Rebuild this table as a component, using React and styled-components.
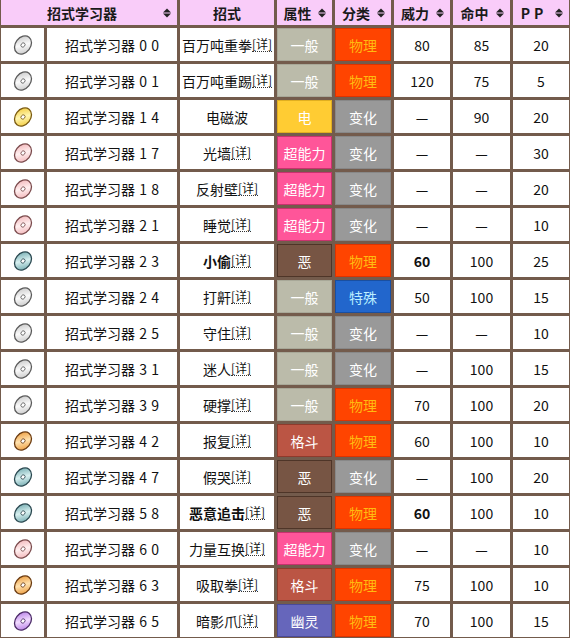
import React from 'react';
import styled, { createGlobalStyle } from 'styled-components';

const GlobalStyle = createGlobalStyle`
  html, body {
    margin: 0;
    padding: 0;
    background: #ffffff;
  }
  body {
    font-family: "Noto Sans CJK SC", "Noto Sans", sans-serif;
    font-size: 14px;
    color: #000;
  }
`;

const types = {
  一般: { bg: '#bbbbaa', border: '#a8a898' },
  电: { bg: '#ffcc33', border: '#e0ae20' },
  超能力: { bg: '#ff5599', border: '#c8326e' },
  恶: { bg: '#775544', border: '#4e3528' },
  格斗: { bg: '#bb5544', border: '#8f3a2c' },
  幽灵: { bg: '#6666bb', border: '#4a4a98' },
};

const categories = {
  物理: { bg: '#ff4400', color: '#ffbb11', border: '#dd3300' },
  特殊: { bg: '#2266cc', color: '#bbeeff', border: '#1a4fa0' },
  变化: { bg: '#999999', color: '#ffffff', border: '#888888' },
};

const discs = {
  grey: ['#fafafa', '#bdbdbd', '#5a5a5a'],
  yellow: ['#fff6b0', '#f0c020', '#7a5a10'],
  pink: ['#fff0f0', '#f0a8ac', '#7a4a4c'],
  teal: ['#d8f0f0', '#5a9aa0', '#2a4850'],
  orange: ['#ffe2b0', '#e88a20', '#6a3a10'],
  purple: ['#f2dcff', '#a868e0', '#4a2a66'],
};

const rows = [
  { no: '00', disc: 'grey', move: '百万吨重拳', type: '一般', cat: '物理', power: '80', acc: '85', pp: '20' },
  { no: '01', disc: 'grey', move: '百万吨重踢', type: '一般', cat: '物理', power: '120', acc: '75', pp: '5' },
  { no: '14', disc: 'yellow', move: '电磁波', type: '电', cat: '变化', power: '—', acc: '90', pp: '20', noLink: true },
  { no: '17', disc: 'pink', move: '光墙', type: '超能力', cat: '变化', power: '—', acc: '—', pp: '30' },
  { no: '18', disc: 'pink', move: '反射壁', type: '超能力', cat: '变化', power: '—', acc: '—', pp: '20' },
  { no: '21', disc: 'pink', move: '睡觉', type: '超能力', cat: '变化', power: '—', acc: '—', pp: '10' },
  { no: '23', disc: 'teal', move: '小偷', type: '恶', cat: '物理', power: '60', acc: '100', pp: '25', bold: true },
  { no: '24', disc: 'grey', move: '打鼾', type: '一般', cat: '特殊', power: '50', acc: '100', pp: '15' },
  { no: '25', disc: 'grey', move: '守住', type: '一般', cat: '变化', power: '—', acc: '—', pp: '10' },
  { no: '31', disc: 'grey', move: '迷人', type: '一般', cat: '变化', power: '—', acc: '100', pp: '15' },
  { no: '39', disc: 'grey', move: '硬撑', type: '一般', cat: '物理', power: '70', acc: '100', pp: '20' },
  { no: '42', disc: 'orange', move: '报复', type: '格斗', cat: '物理', power: '60', acc: '100', pp: '10' },
  { no: '47', disc: 'teal', move: '假哭', type: '恶', cat: '变化', power: '—', acc: '100', pp: '20' },
  { no: '58', disc: 'teal', move: '恶意追击', type: '恶', cat: '物理', power: '60', acc: '100', pp: '10', bold: true },
  { no: '60', disc: 'pink', move: '力量互换', type: '超能力', cat: '变化', power: '—', acc: '—', pp: '10' },
  { no: '63', disc: 'orange', move: '吸取拳', type: '格斗', cat: '物理', power: '75', acc: '100', pp: '10' },
  { no: '65', disc: 'purple', move: '暗影爪', type: '幽灵', cat: '物理', power: '70', acc: '100', pp: '15' },
];

const Table = styled.div`
  display: grid;
  grid-template-columns: 43px 130px 94px 55px 56px 56px 57px 56px;
  grid-template-rows: 25px;
  grid-auto-rows: 33px;
  gap: 3px;
  padding: 0 1px 1px;
  width: 570px;
  box-sizing: border-box;
  background: #735b4c;
`;

const HeadCell = styled.div`
  grid-column: ${(p) => (p.$span ? `span ${p.$span}` : 'auto')};
  display: flex;
  align-items: center;
  justify-content: center;
  position: relative;
  background: #f9ccf9;
  font-weight: bold;
  font-size: 14px;
  color: #1a1a1a;
  padding-right: ${(p) => (p.$sortable ? '14px' : '0')};
  letter-spacing: ${(p) => p.$spaced || 0};
`;

const SortIcon = styled.span`
  position: absolute;
  right: 6px;
  top: 50%;
  transform: translateY(-50%);
  display: flex;
  flex-direction: column;
  gap: 1px;

  &::before,
  &::after {
    content: '';
    display: block;
    border-left: 4px solid transparent;
    border-right: 4px solid transparent;
  }
  &::before {
    border-bottom: 4px solid #222;
  }
  &::after {
    border-top: 4px solid #222;
  }
`;

const Cell = styled.div`
  display: flex;
  align-items: center;
  justify-content: center;
  background: #ffffff;
  font-size: 14px;
  color: #111;
  font-weight: ${(p) => (p.$bold ? 'bold' : 'normal')};
  white-space: nowrap;
`;

const NameCell = styled(Cell)`
  word-spacing: 1px;
`;

const Tag = styled(Cell)`
  background: ${(p) => p.$bg};
  color: ${(p) => p.$color || '#ffffff'};
  box-shadow: inset 0 0 0 1px ${(p) => p.$border};
`;

const Detail = styled.sup`
  font-size: 12px;
  line-height: 1;
  vertical-align: 7px;
  border-bottom: 1px dotted #333;
  font-weight: normal;
  padding-bottom: 1px;
`;

const Disc = ({ kind }) => {
  const [light, mid, dark] = discs[kind];
  const id = `g-${kind}`;
  return (
    <svg width="22" height="22" viewBox="0 0 22 22">
      <defs>
        <linearGradient id={id} x1="0" y1="0" x2="1" y2="1">
          <stop offset="0" stopColor={mid} />
          <stop offset="0.5" stopColor={light} />
          <stop offset="1" stopColor={mid} />
        </linearGradient>
      </defs>
      <ellipse cx="11" cy="11" rx="7.6" ry="9.8" transform="rotate(38 11 11)" fill={`url(#${id})`} stroke={dark} strokeWidth="1.3" />
      <ellipse cx="11" cy="11" rx="1.9" ry="2.3" transform="rotate(38 11 11)" fill="#fff" stroke={dark} strokeWidth="0.8" />
    </svg>
  );
};

const App = () => (
  <>
    <GlobalStyle />
    <Table>
      <HeadCell $span={2} $sortable>
        招式学习器
        <SortIcon />
      </HeadCell>
      <HeadCell>招式</HeadCell>
      <HeadCell $sortable>
        属性
        <SortIcon />
      </HeadCell>
      <HeadCell $sortable>
        分类
        <SortIcon />
      </HeadCell>
      <HeadCell $sortable>
        威力
        <SortIcon />
      </HeadCell>
      <HeadCell $sortable>
        命中
        <SortIcon />
      </HeadCell>
      <HeadCell $sortable $spaced="4px">
        PP
        <SortIcon />
      </HeadCell>

      {rows.map((r) => (
        <React.Fragment key={r.no}>
          <Cell>
            <Disc kind={r.disc} />
          </Cell>
          <NameCell>招式学习器 {r.no[0]} {r.no[1]}</NameCell>
          <Cell $bold={r.bold}>
            {r.move}
            {!r.noLink && <Detail>[详]</Detail>}
          </Cell>
          <Tag $bg={types[r.type].bg} $border={types[r.type].border}>
            {r.type}
          </Tag>
          <Tag
            $bg={categories[r.cat].bg}
            $color={categories[r.cat].color}
            $border={categories[r.cat].border}
          >
            {r.cat}
          </Tag>
          <Cell $bold={r.bold}>{r.power}</Cell>
          <Cell>{r.acc}</Cell>
          <Cell>{r.pp}</Cell>
        </React.Fragment>
      ))}
    </Table>
  </>
);

export default App;
